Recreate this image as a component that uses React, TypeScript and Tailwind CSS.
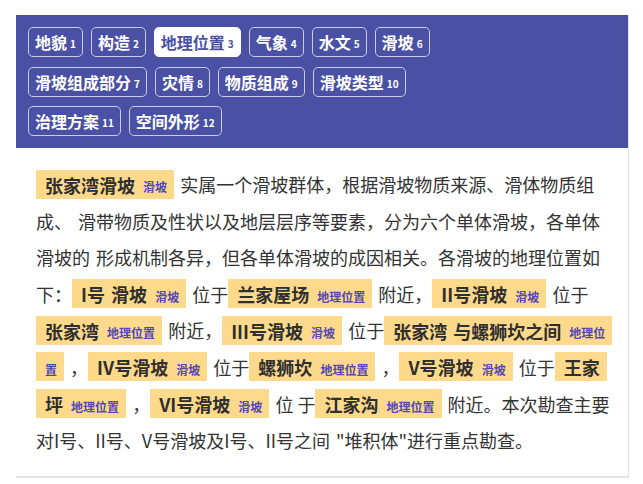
import React from "react";

const tagRows: { label: string; n: number }[][] = [
    [
        { label: "地貌", n: 1 },
        { label: "构造", n: 2 },
        { label: "地理位置", n: 3 },
        { label: "气象", n: 4 },
        { label: "水文", n: 5 },
        { label: "滑坡", n: 6 },
    ],
    [
        { label: "滑坡组成部分", n: 7 },
        { label: "灾情", n: 8 },
        { label: "物质组成", n: 9 },
        { label: "滑坡类型", n: 10 },
    ],
    [
        { label: "治理方案", n: 11 },
        { label: "空间外形", n: 12 },
    ],
];

const activeTag = 3;

const Tag = ({ label, n }: { label: string; n: number }) => {
    const active = n === activeTag;
    return (
        <span
            className={`flex items-center h-[30px] px-[6px] rounded-[5px] border font-bold ${
                active ? "bg-white border-white text-[#4a51a5]" : "border-[#c9cbe8] text-white"
            }`}
        >
            <span className="text-[16px] leading-none">{label}</span>
            <span className="text-[10px] leading-none ml-[3px] mt-[4px]">{n}</span>
        </span>
    );
};

// highlighted entity in the text
const Mark = ({ text, kind }: { text: string; kind: string }) => (
    <span className="bg-[#fdd98b] pl-[9px] pr-[7px] py-[1.5px] font-bold text-[#2f2f2f] [box-decoration-break:clone]">
        {text} <span className="text-[12px] leading-none text-[#5346b8] ml-[2px]">{kind}</span>
    </span>
);

const App = () => {
    return (
        <div className="min-h-screen bg-white pt-[15px] pl-4 font-['Noto_Sans_CJK_SC','Noto_Sans',sans-serif]">
            <div className="w-[613px] border-r border-[#e2e2e2] border-b-2 border-b-[#e4e4e4]">
                <div className="bg-[#4a51a5] px-3 py-3 flex flex-col gap-[9.5px]">
                    {tagRows.map((row, i) => (
                        <div key={i} className="flex gap-2">
                            {row.map((t) => (
                                <Tag key={t.n} label={t.label} n={t.n} />
                            ))}
                        </div>
                    ))}
                </div>
                <div className="pl-5 pr-4 pt-[18px] pb-[17px]">
                    <p className="text-[18px] leading-[36.6px] text-[#333] [word-spacing:2px]">
                        <Mark text="张家湾滑坡" kind="滑坡" /> 实属一个滑坡群体，根据滑坡物质来源、滑体物质组成、 滑带物质及性状以及地层层序等要素，分为六个单体滑坡，各单体滑坡的 形成机制各异，但各单体滑坡的成因相关。各滑坡的地理位置如下：<Mark text="I号 滑坡" kind="滑坡" /> 位于<Mark text="兰家屋场" kind="地理位置" /> 附近，<Mark text="II号滑坡" kind="滑坡" /> 位于<Mark text="张家湾" kind="地理位置" /> 附近，<Mark text="III号滑坡" kind="滑坡" /> 位于<Mark text="张家湾 与螺狮坎之间" kind="地理位置" /> ，<Mark text="IV号滑坡" kind="滑坡" /> 位于<Mark text="螺狮坎" kind="地理位置" /> ，<Mark text="V号滑坡" kind="滑坡" /> 位于<Mark text="王家坪" kind="地理位置" /> ，<Mark text="VI号滑坡" kind="滑坡" /> <span className="[word-spacing:0]">位 于</span><Mark text="江家沟" kind="地理位置" /> 附近。本次勘查主要对I号、II号、V号滑坡及I号、II号之间 "堆积体"进行重点勘查。
                    </p>
                </div>
            </div>
        </div>
    );
};

export default App;
